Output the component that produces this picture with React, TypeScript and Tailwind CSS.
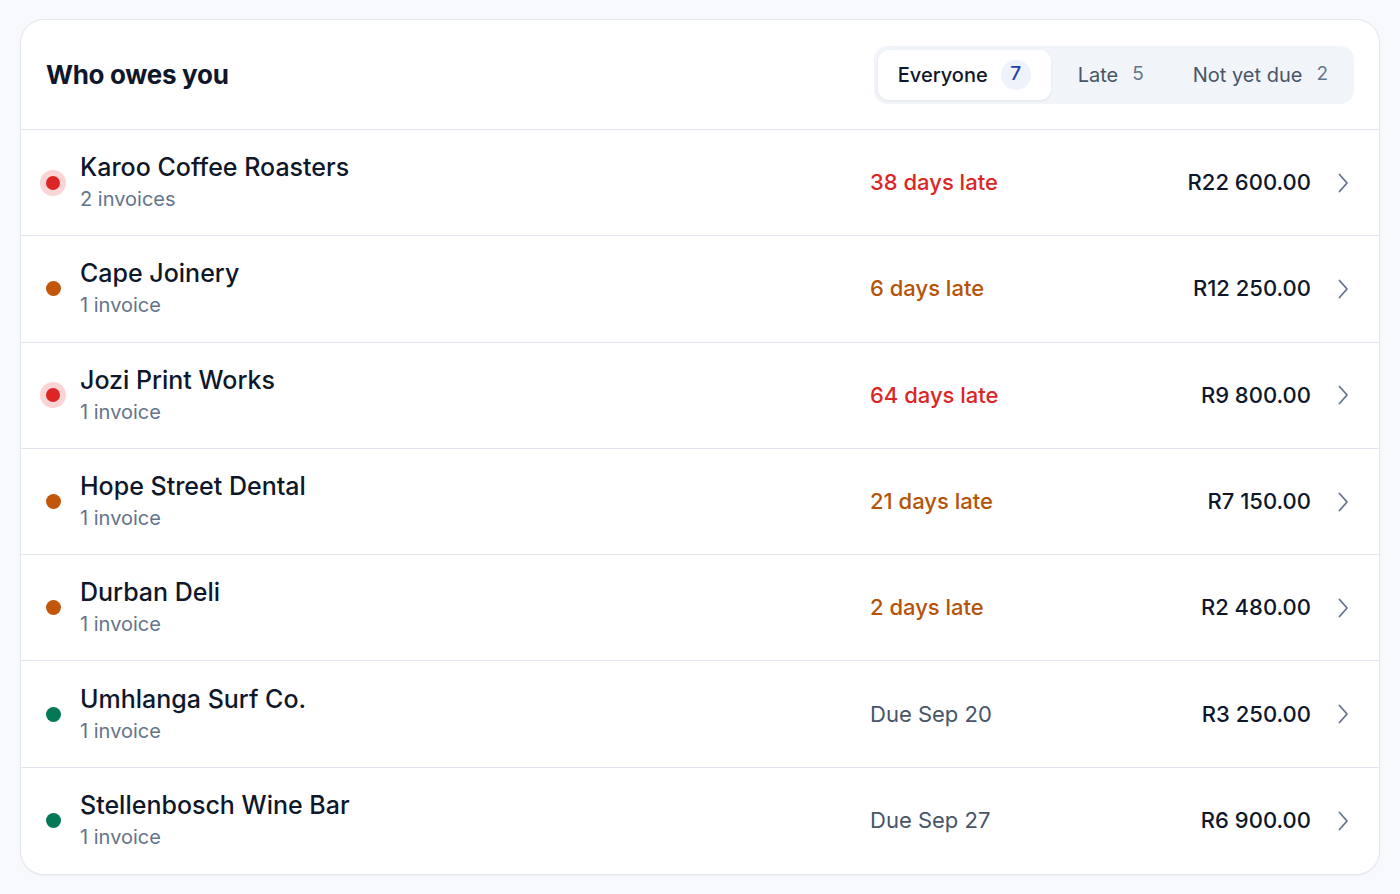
import React, { useState } from "react";

type Row = {
  name: string;
  invoices: number;
  status: string;
  tone: "critical" | "late" | "due";
  amount: string;
};

const rows: Row[] = [
  { name: "Karoo Coffee Roasters", invoices: 2, status: "38 days late", tone: "critical", amount: "R22 600.00" },
  { name: "Cape Joinery", invoices: 1, status: "6 days late", tone: "late", amount: "R12 250.00" },
  { name: "Jozi Print Works", invoices: 1, status: "64 days late", tone: "critical", amount: "R9 800.00" },
  { name: "Hope Street Dental", invoices: 1, status: "21 days late", tone: "late", amount: "R7 150.00" },
  { name: "Durban Deli", invoices: 1, status: "2 days late", tone: "late", amount: "R2 480.00" },
  { name: "Umhlanga Surf Co.", invoices: 1, status: "Due Sep 20", tone: "due", amount: "R3 250.00" },
  { name: "Stellenbosch Wine Bar", invoices: 1, status: "Due Sep 27", tone: "due", amount: "R6 900.00" },
];

const tabs = [
  { id: "all", label: "Everyone", count: 7 },
  { id: "late", label: "Late", count: 5 },
  { id: "upcoming", label: "Not yet due", count: 2 },
];

function Dot({ tone }: { tone: Row["tone"] }) {
  if (tone === "critical") {
    return (
      <span className="flex size-[26px] shrink-0 items-center justify-center rounded-full bg-[#fbd5d5]">
        <span className="size-[14px] rounded-full bg-[#dc2626]" />
      </span>
    );
  }
  return (
    <span className="flex size-[26px] shrink-0 items-center justify-center">
      <span className={`size-[15px] rounded-full ${tone === "late" ? "bg-[#c2570c]" : "bg-[#047857]"}`} />
    </span>
  );
}

export default function App() {
  const [active, setActive] = useState("all");

  return (
    <div className="min-h-screen bg-[#f7f9fc] px-[20px] pt-[19px] pb-[20px] font-['Inter',sans-serif]">
      <div className="overflow-hidden rounded-[24px] border border-[#e2e6ee] bg-white shadow-[0_1px_2px_rgba(15,23,42,0.04)]">
        <div className="flex h-[110px] items-center justify-between border-b border-[#e2e6ee] pl-[25px] pr-[25px]">
          <h2 className="text-[26px] font-bold tracking-[-0.3px] text-[#0f172a]">Who owes you</h2>
          <div className="flex h-[58px] items-center rounded-[14px] bg-[#f1f4f8] p-[4px]">
            {tabs.map((t) => {
              const on = active === t.id;
              return (
                <button
                  key={t.id}
                  onClick={() => setActive(t.id)}
                  className={`flex h-[50px] items-center rounded-[11px] text-[20px] ${
                    on
                      ? "gap-[13px] bg-white px-[20px] font-medium text-[#0f172a] shadow-[0_1px_3px_rgba(15,23,42,0.08)]"
                      : "gap-[14px] pl-[27px] pr-[22px] text-[#475569]"
                  }`}
                >
                  {t.label}
                  {on ? (
                    <span className="flex h-[30px] min-w-[30px] items-center justify-center rounded-full bg-[#eef2fb] px-[8px] text-[19px] font-medium text-[#1e40af]">
                      {t.count}
                    </span>
                  ) : (
                    <span className="text-[19px] text-[#64748b]">{t.count}</span>
                  )}
                </button>
              );
            })}
          </div>
        </div>

        <ul>
          {rows.map((r, i) => (
            <li
              key={r.name}
              className={`flex h-[106.3px] items-center pl-[19px] pr-[30px] ${
                i < rows.length - 1 ? "border-b border-[#e2e6ee]" : ""
              }`}
            >
              <Dot tone={r.tone} />
              <div className="ml-[14px] flex flex-1 flex-col">
                <span className="text-[25px] leading-[33px] font-medium text-[#0f172a]">{r.name}</span>
                <span className="text-[20px] leading-[30px] text-[#64748b]">
                  {r.invoices} {r.invoices === 1 ? "invoice" : "invoices"}
                </span>
              </div>
              <span
                className={`w-[240px] shrink-0 text-[22px] ${
                  r.tone === "critical"
                    ? "font-medium text-[#dc2626]"
                    : r.tone === "late"
                    ? "font-medium text-[#b45309]"
                    : "text-[#475569]"
                }`}
              >
                {r.status}
              </span>
              <span className="w-[201px] shrink-0 text-right text-[22px] font-medium text-[#0f172a]">{r.amount}</span>
              <svg
                className="ml-[26px] h-[20px] w-[12px] shrink-0 text-[#64748b]"
                viewBox="0 0 12 20"
                fill="none"
                stroke="currentColor"
                strokeWidth="1.8"
                strokeLinecap="round"
                strokeLinejoin="round"
              >
                <path d="M2.5 1.5 10 10l-7.5 8.5" />
              </svg>
            </li>
          ))}
        </ul>
      </div>
    </div>
  );
}
